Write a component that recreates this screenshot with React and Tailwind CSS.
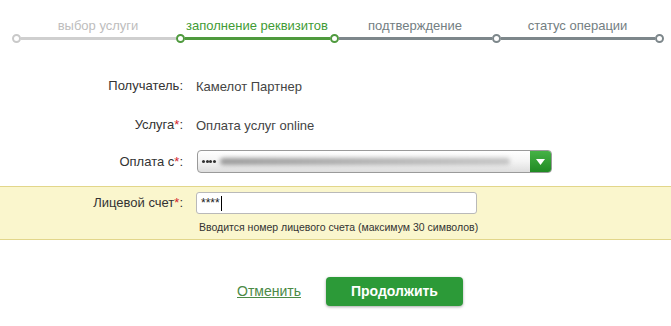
import React from 'react';

const steps = [
  { id: 1, name: 'выбор услуги', w: 'w-[164px]', text: 'text-[#bdbdbd]', line: 'bg-[#cfcfcf]', dot: 'border-[#c9c9c9]', lw: 'w-[155px]' },
  { id: 2, name: 'заполнение реквизитов', w: 'w-[154px]', text: 'text-[#3f9b35]', line: 'bg-[#4f9a3e]', dot: 'border-[#4f9a3e]', lw: 'w-[145px]' },
  { id: 3, name: 'подтверждение', w: 'w-[162px]', text: 'text-[#737e82]', line: 'bg-[#7d878b]', dot: 'border-[#4f9a3e]', lw: 'w-[153px]' },
  { id: 4, name: 'статус операции', w: 'w-[163px]', text: 'text-[#737e82]', line: 'bg-[#7d878b]', dot: 'border-[#7d878b]', lw: 'w-[154px]' },
];

const Star = () => <span className="text-[#d4262b]">*</span>;

const Stepper = () => (
  <div className="pt-[18px]">
    <div className="flex pl-[16px] h-[16px] text-[13px] leading-[16px]">
      {steps.map((s) => (
        <div key={s.id} className={`${s.w} ${s.text} text-center`}>{s.name}</div>
      ))}
    </div>
    <div className="flex items-center pl-[12px] h-[9px]">
      {steps.map((s) => (
        <React.Fragment key={s.id}>
          <div className={`w-[9px] h-[9px] rounded-full border-2 bg-white ${s.dot}`} />
          <div className={`${s.lw} h-[3px] ${s.line}`} />
        </React.Fragment>
      ))}
      <div className="w-[9px] h-[9px] rounded-full border-2 bg-white border-[#7d878b]" />
    </div>
  </div>
);

const Row = ({ label, children, className = '' }) => (
  <div className={`flex items-center ${className}`}>
    <div className="w-[184px] text-right text-[13px] text-[#333] pr-[1px]">{label}</div>
    <div className="ml-[12px] flex-1">{children}</div>
  </div>
);

const App = () => (
  <div className="w-[671px] h-[326px] bg-white overflow-hidden" style={{ fontFamily: '"Liberation Sans", Arial, sans-serif' }}>
    <Stepper />

    <Row label="Получатель:" className="mt-[35px] h-[16px]">
      <span className="text-[13px] text-[#444]">Камелот Партнер</span>
    </Row>
    <Row label={<>Услуга<Star />:</>} className="mt-[23px] h-[16px]">
      <span className="text-[13px] text-[#444]">Оплата услуг online</span>
    </Row>
    <Row label={<>Оплата с<Star />:</>} className="mt-[17px] h-[23px]">
      <div className="ml-[1px] w-[355px] h-[23px] flex rounded-[4px] border border-[#9a9a9a] bg-gradient-to-b from-white via-[#f4f4f4] to-[#dedede] overflow-hidden">
        <div className="flex-1 flex items-center pl-[4px]">
          <div className="flex gap-[0.5px]">
            <span className="w-[3px] h-[3px] bg-[#333] rounded-full" />
            <span className="w-[3px] h-[3px] bg-[#333] rounded-full" />
            <span className="w-[3px] h-[3px] bg-[#333] rounded-full" />
            <span className="w-[3px] h-[3px] bg-[#333] rounded-full" />
          </div>
          <div className="ml-[4px] w-[290px] h-[7px] bg-gradient-to-r from-[#9a9a9a] via-[#b0b0b0] to-[#c4c4c4] blur-[2px] rounded-full" />
        </div>
        <div className="w-[21px] h-full flex items-center justify-center bg-gradient-to-b from-[#45b245] to-[#1f8a23]">
          <svg width="9" height="6" viewBox="0 0 9 6"><path d="M0 0h9L4.5 6z" fill="#fff" /></svg>
        </div>
      </div>
    </Row>

    <div className="mt-[13px] border-y border-[#e2d68a] bg-[#faf6cd] pt-[5px] pb-[5px]">
      <Row label={<>Лицевой счет<Star />:</>} className="h-[22px]">
        <div className="w-[281px] h-[22px] flex items-center rounded-[3px] border border-[#b9b9b9] bg-white pl-[4px]">
          <span className="text-[12px] text-[#222] leading-none">****</span>
          <span className="ml-[1px] w-[1px] h-[15px] bg-black" />
        </div>
      </Row>
      <div className="mt-[6px] pl-[199px] text-[10.5px] leading-[14px] text-[#333]">
        Вводится номер лицевого счета (максимум 30 символов)
      </div>
    </div>

    <div className="mt-[37px] flex items-center">
      <a href="#" className="ml-[237px] text-[14px] text-[#4b8a46] underline">Отменить</a>
      <button className="ml-[25px] w-[137px] h-[29px] rounded-[4px] bg-[#2c9a38] text-white font-bold text-[14px] shadow-[0_1px_3px_rgba(0,0,0,0.35)]">
        Продолжить
      </button>
    </div>
  </div>
);

export default App;
